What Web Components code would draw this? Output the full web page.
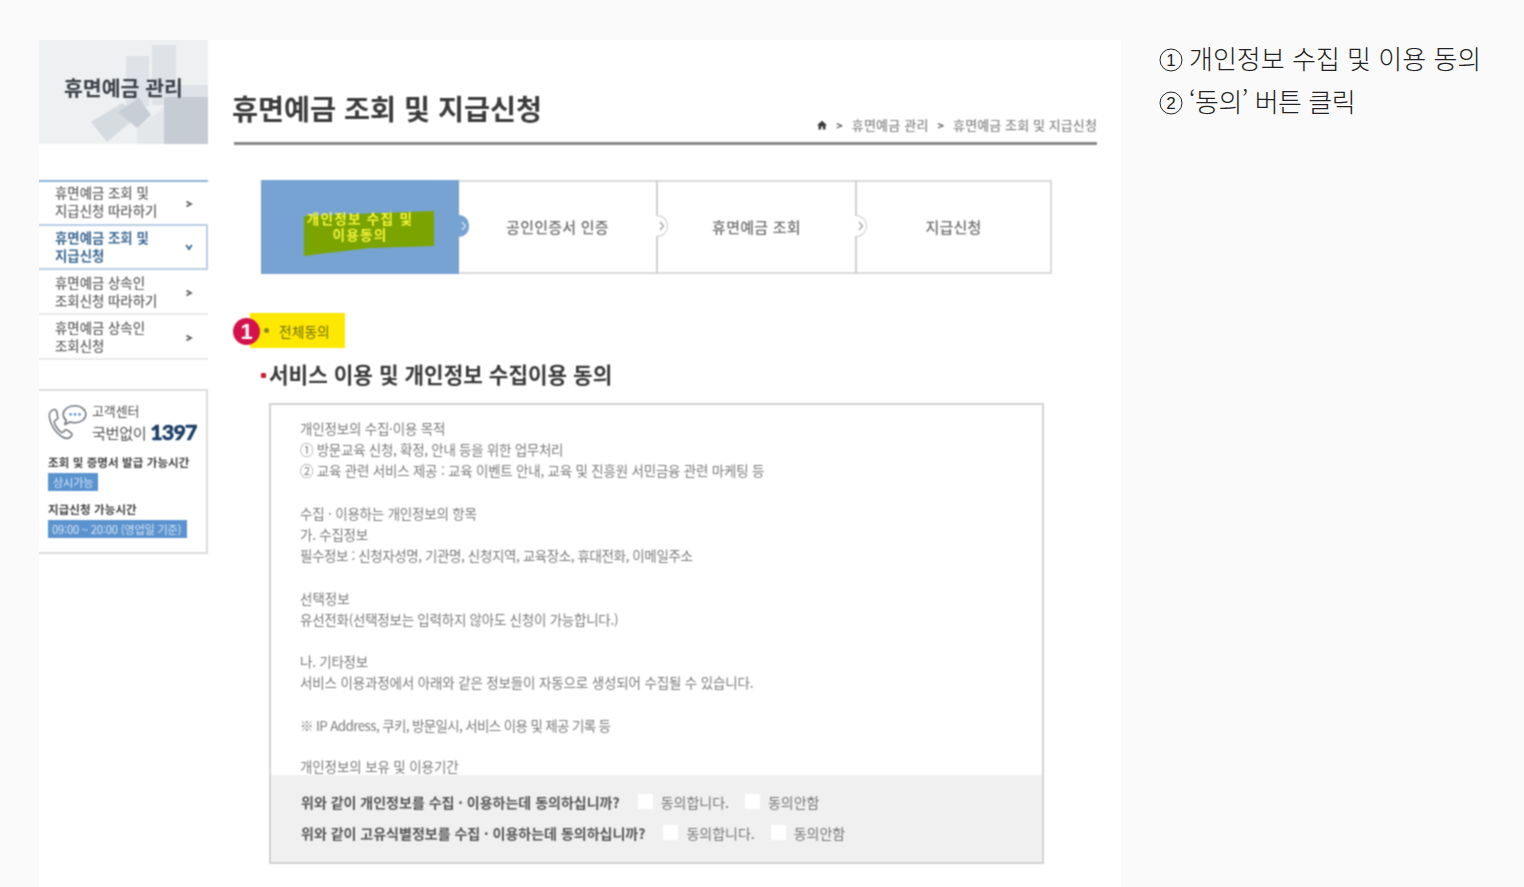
<!DOCTYPE html>
<html lang="ko">
<head>
<meta charset="utf-8">
<title>휴면예금 조회 및 지급신청</title>
<style>
html,body{margin:0;height:100%;overflow:hidden}
body{background:#fafafa;font-family:"Noto Sans CJK KR","Noto Sans",sans-serif}
</style>
</head>
<body>
<guide-page>
  <shot-frame slot="shot">
    <side-column slot="side">
      <side-banner>휴면예금 관리</side-banner>
      <side-nav>
        <nav-item first>휴면예금 조회 및<br>지급신청 따라하기</nav-item>
        <nav-item active>휴면예금 조회 및<br>지급신청</nav-item>
        <nav-item>휴면예금 상속인<br>조회신청 따라하기</nav-item>
        <nav-item>휴면예금 상속인<br>조회신청</nav-item>
      </side-nav>
      <help-box></help-box>
    </side-column>
    <main-column slot="main">
      <page-head></page-head>
      <step-bar></step-bar>
      <agree-badge></agree-badge>
      <section-title>서비스 이용 및 개인정보 수집이용 동의</section-title>
      <consent-panel>
        <consent-row>위와 같이 개인정보를 수집 · 이용하는데 동의하십니까?</consent-row>
        <consent-row>위와 같이 고유식별정보를 수집 · 이용하는데 동의하십니까?</consent-row>
      </consent-panel>
    </main-column>
  </shot-frame>
  <guide-notes slot="notes"></guide-notes>
</guide-page>

<script>
function define(name, css, html, ready){
  const cls = class extends HTMLElement{
    constructor(){
      super();
      this.attachShadow({mode:'open'}).innerHTML = '<style>'+css+'</style>'+html;
    }
    connectedCallback(){ if(ready) ready(this); }
  };
  customElements.define(name, cls);
}
const KR = '"Noto Sans CJK KR","Noto Sans",sans-serif';
const TIGHT = '"Liberation Sans","Noto Sans CJK KR",sans-serif';

define('guide-page',
 `:host{display:flex;width:1524px;height:887px;padding:40px 0 0 39px;box-sizing:border-box;overflow:hidden}`,
 `<slot name="shot"></slot><slot name="notes"></slot>`);

define('shot-frame',
 `:host{display:block;width:1082px;height:847px;flex:none;font-family:${KR}}
  .soft{display:flex;width:100%;height:100%;background:#fff;filter:url(#soften)}
  svg{display:block;width:0;height:0;overflow:hidden}`,
 `<svg aria-hidden="true"><filter id="soften" x="0" y="0" width="1" height="1" color-interpolation-filters="sRGB"><feConvolveMatrix order="3" kernelMatrix="1 2 1 2 4 2 1 2 1" divisor="16" preserveAlpha="true" edgeMode="duplicate"/></filter></svg>
  <div class="soft"><slot name="side"></slot><slot name="main"></slot></div>`);

define('side-column',
 `:host{display:flex;flex-direction:column;width:169px;flex:none}`,
 `<slot></slot>`);

define('side-banner',
 `:host{display:block;position:relative;height:104px;background:#eff0f1;overflow:hidden}
  svg{position:absolute;inset:0;width:169px;height:104px}
  span{position:relative;display:block;padding:32px 0 0 25px;font-size:20.5px;line-height:30px;font-weight:700;color:#3b4148;white-space:nowrap}`,
 `<svg viewBox="0 0 169 104" aria-hidden="true">
   <rect x="87" y="16" width="23" height="50" fill="#dfe2e6"/>
   <rect x="113" y="5" width="24" height="60" fill="#dfe2e6"/>
   <rect x="125" y="45" width="44" height="14" fill="#dfe2e6"/>
   <path d="M98 104V88l27-20v36z" fill="#e4e7ea"/>
   <rect x="125" y="57" width="44" height="47" fill="#c5ccd4"/>
   <path d="M52 82l16 20 32-27-17-12z" fill="#d6dbe0"/>
   <path d="M79 72l19 16 14-13-12-17z" fill="#c8ced5"/>
  </svg><span><slot></slot></span>`);

define('side-nav',
 `:host{display:block;margin-top:36px}`,
 `<slot></slot>`);

define('nav-item',
 `:host{display:flex;align-items:center;justify-content:space-between;box-sizing:border-box;height:45px;padding:0 15px 0 16px;border-bottom:2px solid #e9eaeb;font-size:13.4px;line-height:18px;color:#666;white-space:nowrap;font-weight:500}
  :host([first]){height:44px;border-top:2px solid #8fb5da;border-bottom:0}
  :host([active]){height:46px;border:2px solid #b9cfe6;border-left:0;padding-left:16px;padding-right:13px;color:#3f6a93;font-weight:700}
  span{margin-bottom:2px}
  :host([first]) span{margin-bottom:4px}
  svg{width:8px;height:8px;flex:none;margin-top:2px}
  :host([active]) svg{margin-top:0}`,
 `<span><slot></slot></span><svg viewBox="0 0 8 8" fill="none" stroke="#666" stroke-width="1.8"><path d="M1.5 1.600 6 4 1.500 6.400"/></svg>`,
 el=>{
   if(el.hasAttribute('active')){
     const p=el.shadowRoot.querySelector('svg path');
     p.setAttribute('d','M1.200 2 4 6.200 6.800 2');
     p.setAttribute('stroke','#3f6a93');
   }
 });

define('help-box',
 `:host{display:block;box-sizing:border-box;height:165px;margin-top:29px;padding:11px 9px 0 9px;border:2px solid #dcdcdc;border-left:0;color:#555}
  .top{display:flex;gap:5px;height:52px}
  svg{width:39px;height:36px;flex:none;margin-top:3px}
  .a{font-size:13px;line-height:18px;color:#555;letter-spacing:-.1px;white-space:nowrap}
  .b{display:flex;align-items:center;gap:4px;font-size:15.200px;line-height:26px;margin-top:-1px;color:#555;letter-spacing:-.4px;white-space:nowrap}
  b{font:900 21.500px/26px Lato,"Open Sans",sans-serif;color:#1c3f66;letter-spacing:-.9px;-webkit-text-stroke:.5px #1c3f66}
  h4{margin:0;font-size:11.500px;line-height:16px;font-weight:700;color:#444;letter-spacing:.1px;white-space:nowrap}
  .t{display:block;width:max-content;box-sizing:border-box;height:18px;margin-top:3px;padding:0 5px;background:#5b93cf;color:#d7e6f5;font-size:11.200px;line-height:18px;letter-spacing:-.2px;white-space:nowrap}
  h4.s{margin-top:10px}
  .t.w{width:139px;padding:0 4px}`,
 `<div class="top">
   <svg viewBox="0 0 39 36" fill="none" stroke="#6d7279" stroke-width="1.500" stroke-linecap="round" stroke-linejoin="round" aria-hidden="true">
     <path d="M6 4.500C3 5 1 8 1.400 12c.8 8 7 17 14 20.500 3 1.500 6 1 8-1.500 1-1.300.7-2.500-.5-3.300l-3.400-2.400c-1.200-.8-2.300-.5-3.200.5l-1 1.200c-.7.7-1.500.7-2.300.1-3-2.300-5.500-6-6.700-9.600-.3-1 0-1.700.9-2.200l1.300-.7c1.200-.7 1.600-1.800 1.100-3L8.600 6c-.5-1.100-1.400-1.700-2.600-1.500z"/>
     <path d="M27 .8c-6.600 0-11.800 3.700-11.800 8.600 0 2.300 1.100 4.300 3 5.800l-1.500 4.300 5.300-2.500c1.500.5 3.200.7 5 .7 6 0 10.800-3.700 10.800-8.300S33.200.8 27 .8z"/>
     <circle cx="22.500" cy="9.400" r="1.300" fill="#5b93cf" stroke="none"/><circle cx="27" cy="9.400" r="1.300" fill="#5b93cf" stroke="none"/><circle cx="31.500" cy="9.400" r="1.300" fill="#5b93cf" stroke="none"/>
   </svg>
   <div><div class="a">고객센터</div><div class="b">국번없이<b>1397</b></div></div>
 </div>
 <h4>조회 및 증명서 발급 가능시간</h4>
 <span class="t">상시가능</span>
 <h4 class="s">지급신청 가능시간</h4>
 <span class="t w">09:00 ~ 20:00 (영업일 기준)</span>`);

define('main-column',
 `:host{display:flex;flex-direction:column;flex:1;min-width:0}`,
 `<slot></slot>`);

define('page-head',
 `:host{display:flex;justify-content:space-between;align-items:flex-end;box-sizing:border-box;height:105px;margin:0 24px 0 26px;border-bottom:3px solid #8a8a8a;padding-bottom:8px}
  h1{margin:0 0 5px -2px;font-size:28.300px;line-height:42px;font-weight:700;color:#3c3c3c;white-space:nowrap}
  nav{display:flex;align-items:center;gap:9px;font-size:13px;line-height:18px;color:#8a8a8a;white-space:nowrap;font-weight:500}
  span{letter-spacing:.1px}
  span.m{letter-spacing:.2px}
  svg{width:10px;height:10px;display:block}
  i{font-style:normal;color:#555;font-size:11px;font-weight:700}`,
 `<h1>휴면예금 조회 및 지급신청</h1>
  <nav><svg viewBox="0 0 10 10" aria-hidden="true"><path d="M5 .8 0 5.300h1.500V9.500h2.600V6.600h1.800v2.900h2.600V5.300H10z" fill="#3a3a3a"/></svg><i>&gt;</i><span class="m">휴면예금 관리</span><i>&gt;</i><span>휴면예금 조회 및 지급신청</span></nav>`);

define('step-bar',
 `:host{display:grid;grid-template-columns:196px 197px 199px 195px;position:relative;box-sizing:border-box;width:791px;height:94px;margin:35px 0 0 53px;border:2px solid #dadada}
  .c{position:relative;display:flex;align-items:center;justify-content:center;text-align:center;margin:-2px 0;font-size:15px;font-weight:500;line-height:16px;color:#707070;letter-spacing:.25px;white-space:nowrap}
  .c.d{border-left:2px solid #d0d0d0}
  .c.on{margin-left:-2px;background:#76a3d2;color:#f3f33a;font-weight:700;font-family:${TIGHT};font-size:13.600px;line-height:16.400px;letter-spacing:1.250px;z-index:1}
  .c.on span{position:relative;top:1px}
  svg.mark{position:absolute;left:43px;top:31px;width:131px;height:45px}
  .k{position:absolute;right:-12px;top:35px;width:12px;height:22px;box-sizing:border-box;border-radius:0 11px 11px 0;background:#fff;border:1.500px solid #d0d0d0;border-left:0;z-index:2;display:flex;align-items:center;justify-content:center}
  .k svg{width:6px;height:10px;display:block}
  .c.on .k{background:#76a3d2;border:0;right:-10px;width:10px}`,
 `<div class="c on"><svg class="mark" viewBox="0 0 131 45" aria-hidden="true"><path d="M0 5 130 0v35l-64 2-51 6-15 2z" fill="#7ba400"/></svg><span>개인정보 수집 및<br>이용동의</span><div class="k"><svg viewBox="0 0 6 10" fill="none" stroke="#cfe0f2" stroke-width="1.300"><path d="M1 1l3.500 4L1 9"/></svg></div></div>
  <div class="c"><span>공인인증서 인증</span><div class="k"><svg viewBox="0 0 6 10" fill="none" stroke="#a0a0a0" stroke-width="1.300"><path d="M1 1l3.500 4L1 9"/></svg></div></div>
  <div class="c d"><span>휴면예금 조회</span><div class="k"><svg viewBox="0 0 6 10" fill="none" stroke="#a0a0a0" stroke-width="1.300"><path d="M1 1l3.500 4L1 9"/></svg></div></div>
  <div class="c d"><span>지급신청</span></div>`);

define('agree-badge',
 `:host{display:flex;align-items:center;position:relative;box-sizing:border-box;width:95px;height:35px;margin:39px 0 0 42px;padding-left:14px;background:#ffe800;font-size:13.800px;color:#6e6c12;white-space:nowrap}
  i{display:block;width:5px;height:5px;border-radius:50%;background:#8a8a20;margin-right:10px}
  b{position:absolute;left:-17px;top:5px;width:27px;height:27px;border-radius:50%;background:#d3114d;color:#fff;font:700 22px/27px "Liberation Sans",sans-serif;text-align:center}`,
 `<b>1</b><i></i>전체동의`);

define('section-title',
 `:host{display:flex;align-items:center;margin:9px 0 0 53px;height:33px;font-size:21.300px;font-weight:700;color:#3a3a3a;white-space:nowrap}
  i{display:block;width:5px;height:5px;background:#c8202f;border-radius:1px;margin:3px 3px 0 0}`,
 `<i></i><slot></slot>`);

define('consent-panel',
 `:host{display:flex;flex-direction:column;box-sizing:border-box;width:775px;height:461px;margin:13px 0 0 61px;border:2px solid #d2d2d2}
  .body{flex:1;min-height:0;padding:13px 0 0 29px;font-size:13.500px;line-height:21.200px;color:#7c7c7c;white-space:nowrap}
  .body p{margin:0;height:21.200px}
  .body p.last{height:15px;line-height:15px;margin-top:2.500px;font-family:${TIGHT}}
  .foot{position:relative;flex:none;height:87px;box-sizing:border-box;padding:14px 0 0 30px;background:#f0f0f0;display:flex;flex-direction:column;gap:6px}`,
 `<div class="body">
   <p style="letter-spacing:-.2px">개인정보의 수집·이용 목적</p>
   <p style="letter-spacing:-.28px">① 방문교육 신청, 확정, 안내 등을 위한 업무처리</p>
   <p style="letter-spacing:-.22px">② 교육 관련 서비스 제공 : 교육 이벤트 안내, 교육 및 진흥원 서민금융 관련 마케팅 등</p>
   <p></p>
   <p style="letter-spacing:-.2px">수집 · 이용하는 개인정보의 항목</p>
   <p style="letter-spacing:-.25px">가. 수집정보</p>
   <p style="letter-spacing:-.4px">필수정보 : 신청자성명, 기관명, 신청지역, 교육장소, 휴대전화, 이메일주소</p>
   <p></p>
   <p>선택정보</p>
   <p style="letter-spacing:-.25px">유선전화(선택정보는 입력하지 않아도 신청이 가능합니다.)</p>
   <p></p>
   <p style="letter-spacing:-.25px">나. 기타정보</p>
   <p style="letter-spacing:-.15px">서비스 이용과정에서 아래와 같은 정보들이 자동으로 생성되어 수집될 수 있습니다.</p>
   <p></p>
   <p style="letter-spacing:-.65px">※ IP Address, 쿠키, 방문일시, 서비스 이용 및 제공 기록 등</p>
   <p></p>
   <p class="last" style="letter-spacing:-.12px">개인정보의 보유 및 이용기간</p>
  </div>
  <div class="foot"><slot></slot></div>`);

define('consent-row',
 `:host{display:flex;align-items:center;height:25px;font-size:14px;color:#777;white-space:nowrap}
  b{font-weight:700;color:#555}
  i{display:block;width:15px;height:15px;background:#fff;flex:none}
  i.f{margin-left:18px} i.s{margin-left:16px}
  span{margin-left:8px}`,
 `<b><slot></slot></b><i class="f"></i><span>동의합니다.</span><i class="s"></i><span>동의안함</span>`);

define('guide-notes',
 `:host{display:flex;flex-direction:column;margin:-4px 0 0 38px;font-size:26px;line-height:43px;color:#222;white-space:nowrap;font-family:${KR};font-weight:300}
  div{display:flex;align-items:center;gap:6px}
  svg{width:24px;height:24px;flex:none;margin-top:4px}
  text{font:400 17px "Liberation Sans",sans-serif;fill:#222}
  .n{letter-spacing:-.5px}`,
 `<div><svg viewBox="0 0 24 24"><circle cx="12" cy="12" r="11" fill="none" stroke="#222" stroke-width="1"/><text x="12" y="18" text-anchor="middle">1</text></svg><span>개인정보 수집 및 이용 동의</span></div>
  <div><svg viewBox="0 0 24 24"><circle cx="12" cy="12" r="11" fill="none" stroke="#222" stroke-width="1"/><text x="12" y="18" text-anchor="middle">2</text></svg><span class="n">‘동의’ 버튼 클릭</span></div>`);
</script>
</body>
</html>
